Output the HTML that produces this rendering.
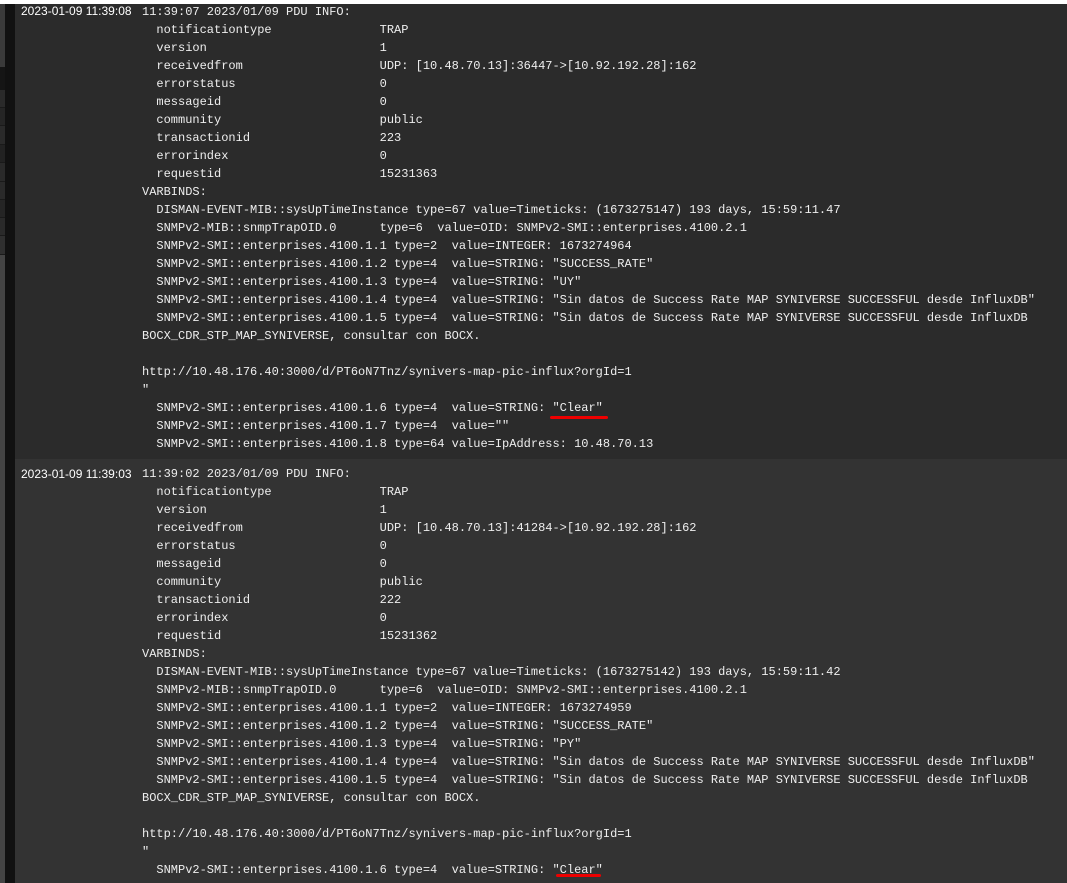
<!DOCTYPE html>
<html><head><meta charset="utf-8"><style>
html,body{margin:0;padding:0;width:1067px;height:883px;overflow:hidden;background:#333}
#top{position:absolute;left:0;top:0;width:1067px;height:4px;background:#fff}
#l1{position:absolute;left:0;top:4px;width:5px;height:879px;background:#444}
#l2{position:absolute;left:5px;top:4px;width:10px;height:879px;background:#111}
.row{position:absolute;left:15px;width:1052px}
#r1{top:4px;height:455px;background:#2b2b2b}
#r2{top:459px;height:424px;background:#333}
.ts{position:absolute;left:6px;font:12px/18px "Liberation Sans",sans-serif;color:#fff;white-space:nowrap}
pre{position:absolute;left:127px;margin:0;font:12px/18px "Liberation Mono",monospace;color:#eee}
.ul{position:absolute;height:3px;background:#e00;border-radius:2px}
.cell{position:absolute;left:0;width:5px;background:#2a2a2a;border-bottom:1px solid #1a1a1a}
</style></head><body>
<div id="top"></div>
<div id="l1"></div>
<div class="cell" style="top:4px;height:63px;background:#3a3a3a"></div>
<div class="cell" style="top:67px;height:23px;background:#151515;border:none"></div>
<div class="cell" style="top:90px;height:17px"></div>
<div class="cell" style="top:108px;height:17px;background:#252525"></div>
<div class="cell" style="top:126px;height:18px"></div>
<div class="cell" style="top:145px;height:17px;background:#222"></div>
<div class="cell" style="top:163px;height:18px"></div>
<div class="cell" style="top:182px;height:17px"></div>
<div class="cell" style="top:200px;height:17px;background:#252525"></div>
<div class="cell" style="top:218px;height:17px"></div>
<div class="cell" style="top:236px;height:18px;background:#2f2f2f"></div>
<div id="l2"></div>
<div class="row" id="r1">
<div class="ts" style="top:-2px">2023-01-09 11:39:08</div>
<pre style="top:-1px">11:39:07 2023/01/09 PDU INFO:
  notificationtype               TRAP
  version                        1
  receivedfrom                   UDP: [10.48.70.13]:36447-&gt;[10.92.192.28]:162
  errorstatus                    0
  messageid                      0
  community                      public
  transactionid                  223
  errorindex                     0
  requestid                      15231363
VARBINDS:
  DISMAN-EVENT-MIB::sysUpTimeInstance type=67 value=Timeticks: (1673275147) 193 days, 15:59:11.47
  SNMPv2-MIB::snmpTrapOID.0      type=6  value=OID: SNMPv2-SMI::enterprises.4100.2.1
  SNMPv2-SMI::enterprises.4100.1.1 type=2  value=INTEGER: 1673274964
  SNMPv2-SMI::enterprises.4100.1.2 type=4  value=STRING: "SUCCESS_RATE"
  SNMPv2-SMI::enterprises.4100.1.3 type=4  value=STRING: "UY"
  SNMPv2-SMI::enterprises.4100.1.4 type=4  value=STRING: "Sin datos de Success Rate MAP SYNIVERSE SUCCESSFUL desde InfluxDB"
  SNMPv2-SMI::enterprises.4100.1.5 type=4  value=STRING: "Sin datos de Success Rate MAP SYNIVERSE SUCCESSFUL desde InfluxDB
BOCX_CDR_STP_MAP_SYNIVERSE, consultar con BOCX.

http://10.48.176.40:3000/d/PT6oN7Tnz/synivers-map-pic-influx?orgId=1
"
  SNMPv2-SMI::enterprises.4100.1.6 type=4  value=STRING: "Clear"
  SNMPv2-SMI::enterprises.4100.1.7 type=4  value=""
  SNMPv2-SMI::enterprises.4100.1.8 type=64 value=IpAddress: 10.48.70.13</pre>
</div>
<div class="row" id="r2">
<div class="ts" style="top:6px">2023-01-09 11:39:03</div>
<pre style="top:6px">11:39:02 2023/01/09 PDU INFO:
  notificationtype               TRAP
  version                        1
  receivedfrom                   UDP: [10.48.70.13]:41284-&gt;[10.92.192.28]:162
  errorstatus                    0
  messageid                      0
  community                      public
  transactionid                  222
  errorindex                     0
  requestid                      15231362
VARBINDS:
  DISMAN-EVENT-MIB::sysUpTimeInstance type=67 value=Timeticks: (1673275142) 193 days, 15:59:11.42
  SNMPv2-MIB::snmpTrapOID.0      type=6  value=OID: SNMPv2-SMI::enterprises.4100.2.1
  SNMPv2-SMI::enterprises.4100.1.1 type=2  value=INTEGER: 1673274959
  SNMPv2-SMI::enterprises.4100.1.2 type=4  value=STRING: "SUCCESS_RATE"
  SNMPv2-SMI::enterprises.4100.1.3 type=4  value=STRING: "PY"
  SNMPv2-SMI::enterprises.4100.1.4 type=4  value=STRING: "Sin datos de Success Rate MAP SYNIVERSE SUCCESSFUL desde InfluxDB"
  SNMPv2-SMI::enterprises.4100.1.5 type=4  value=STRING: "Sin datos de Success Rate MAP SYNIVERSE SUCCESSFUL desde InfluxDB
BOCX_CDR_STP_MAP_SYNIVERSE, consultar con BOCX.

http://10.48.176.40:3000/d/PT6oN7Tnz/synivers-map-pic-influx?orgId=1
"
  SNMPv2-SMI::enterprises.4100.1.6 type=4  value=STRING: "Clear"</pre>
</div>
<div class="ul" style="left:550px;top:416px;width:58px"></div>
<div class="ul" style="left:556px;top:874px;width:45px"></div>
</body></html>
